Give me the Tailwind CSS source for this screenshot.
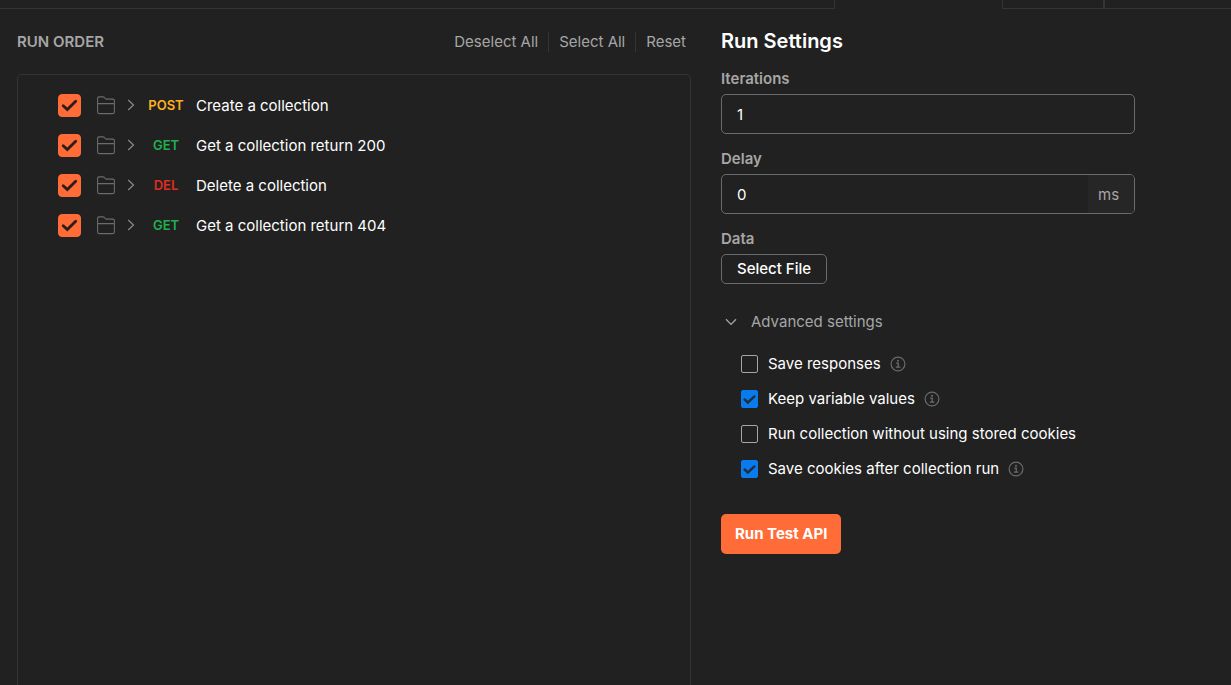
<!DOCTYPE html>
<html lang="en">
<head>
<meta charset="utf-8">
<meta name="viewport" content="width=device-width, initial-scale=1">
<title>Collection Runner</title>
<script src="https://cdn.jsdelivr.net/npm/@tailwindcss/browser@4"></script>
</head>
<body class="flex min-h-screen flex-col bg-[#212121] font-['Inter',sans-serif] text-[15px] leading-5 text-white">
<svg class="hidden" aria-hidden="true">
  <symbol id="check" viewBox="0 0 23 23"><path d="M5.2 11.7l4.1 3.9 8.4-8.3" fill="none" stroke="currentColor" stroke-width="2.8" stroke-linecap="round"/></symbol>
  <symbol id="check-small" viewBox="0 0 17 18"><path d="M3.6 9.5l3.3 3 6.5-6.1" fill="none" stroke="currentColor" stroke-width="2.4" stroke-linecap="round"/></symbol>
  <symbol id="folder" viewBox="0 0 18 19"><path d="M.6 8V2.4Q.6.9 2.1.9h4.1q.8 0 1.2.6l.9 1.2q.3.4 1 .4h6.6q1.5 0 1.5 1.5v11.5q0 1.5-1.5 1.5H2.1q-1.5 0-1.5-1.5zM.6 7.6h16.8" fill="none" stroke="currentColor" stroke-width="1.1"/></symbol>
  <symbol id="chevron-right" viewBox="0 0 8 12"><path d="M1.2 1l5.3 5-5.3 5" fill="none" stroke="currentColor" stroke-width="1.2"/></symbol>
  <symbol id="info" viewBox="0 0 16 16"><circle cx="8" cy="8" r="6.9" fill="none" stroke="currentColor" stroke-width="1.2"/><path d="M6.2 7.1h2v4M5.8 11.2h4.6" fill="none" stroke="currentColor" stroke-width="1.3"/><circle cx="8" cy="4.7" r="1" fill="currentColor"/></symbol>
</svg>

<div class="flex h-[9px] shrink-0">
  <div class="min-w-0 flex-1 border-r border-b border-[#343434]"></div>
  <div class="w-[167px]"></div>
  <div class="w-[101px] border-b border-l border-[#343434]"></div>
  <div class="w-32 border-b border-l-2 border-[#343434]"></div>
</div>

<main class="flex flex-1">
  <section class="flex min-w-0 flex-1 flex-col pl-[17px]">
    <header class="flex h-[65px] items-center justify-between pr-[5px] text-[#a6a6a6]">
      <h1 class="font-semibold">RUN ORDER</h1>
      <div class="flex items-center">
        <button type="button" class="pr-2.5">Deselect All</button>
        <button type="button" class="border-l border-[#343434] px-2.5">Select All</button>
        <button type="button" class="border-l border-[#343434] pl-2.5">Reset</button>
      </div>
    </header>
    <ul class="flex-1 rounded-t-[5px] border border-b-0 border-[#343434] pt-2.5 pl-10">
      <li class="flex h-10 items-center">
        <span class="grid size-[23px]">
          <input id="r1" type="checkbox" checked class="col-start-1 row-start-1 size-[23px] appearance-none rounded-[4px] border border-[#a6a6a6] checked:border-[#ff6c37] checked:bg-[#ff6c37]">
          <svg class="pointer-events-none col-start-1 row-start-1 size-[23px] text-[#2b1d17]"><use href="#check"/></svg>
        </span>
        <svg class="ml-4 h-[19px] w-[18px] text-[#6b6b6b]"><use href="#folder"/></svg>
        <svg class="ml-3 h-3 w-2 text-[#8a8a8a]"><use href="#chevron-right"/></svg>
        <span class="ml-[11px] w-10 text-center text-[13px] leading-5 font-semibold text-[#ffb020]">POST</span>
        <label for="r1" class="ml-2.5 pt-0.5">Create a collection</label>
      </li>
      <li class="flex h-10 items-center">
        <span class="grid size-[23px]">
          <input id="r2" type="checkbox" checked class="col-start-1 row-start-1 size-[23px] appearance-none rounded-[4px] border border-[#a6a6a6] checked:border-[#ff6c37] checked:bg-[#ff6c37]">
          <svg class="pointer-events-none col-start-1 row-start-1 size-[23px] text-[#2b1d17]"><use href="#check"/></svg>
        </span>
        <svg class="ml-4 h-[19px] w-[18px] text-[#6b6b6b]"><use href="#folder"/></svg>
        <svg class="ml-3 h-3 w-2 text-[#8a8a8a]"><use href="#chevron-right"/></svg>
        <span class="ml-[11px] w-10 text-center text-[13px] leading-5 font-semibold text-[#20b04f]">GET</span>
        <label for="r2" class="ml-2.5 pt-0.5">Get a collection return 200</label>
      </li>
      <li class="flex h-10 items-center">
        <span class="grid size-[23px]">
          <input id="r3" type="checkbox" checked class="col-start-1 row-start-1 size-[23px] appearance-none rounded-[4px] border border-[#a6a6a6] checked:border-[#ff6c37] checked:bg-[#ff6c37]">
          <svg class="pointer-events-none col-start-1 row-start-1 size-[23px] text-[#2b1d17]"><use href="#check"/></svg>
        </span>
        <svg class="ml-4 h-[19px] w-[18px] text-[#6b6b6b]"><use href="#folder"/></svg>
        <svg class="ml-3 h-3 w-2 text-[#8a8a8a]"><use href="#chevron-right"/></svg>
        <span class="ml-[11px] w-10 text-center text-[13px] leading-5 font-semibold text-[#e02b20]">DEL</span>
        <label for="r3" class="ml-2.5 pt-0.5">Delete a collection</label>
      </li>
      <li class="flex h-10 items-center">
        <span class="grid size-[23px]">
          <input id="r4" type="checkbox" checked class="col-start-1 row-start-1 size-[23px] appearance-none rounded-[4px] border border-[#a6a6a6] checked:border-[#ff6c37] checked:bg-[#ff6c37]">
          <svg class="pointer-events-none col-start-1 row-start-1 size-[23px] text-[#2b1d17]"><use href="#check"/></svg>
        </span>
        <svg class="ml-4 h-[19px] w-[18px] text-[#6b6b6b]"><use href="#folder"/></svg>
        <svg class="ml-3 h-3 w-2 text-[#8a8a8a]"><use href="#chevron-right"/></svg>
        <span class="ml-[11px] w-10 text-center text-[13px] leading-5 font-semibold text-[#20b04f]">GET</span>
        <label for="r4" class="ml-2.5 pt-0.5">Get a collection return 404</label>
      </li>
    </ul>
  </section>

  <form class="flex w-[540px] flex-col items-start pt-[18px] pr-24 pl-[30px]">
    <h2 class="text-xl leading-7 font-semibold">Run Settings</h2>

    <label for="iterations" class="mt-3.5 mb-[5px] font-semibold text-[#a6a6a6]">Iterations</label>
    <input id="iterations" type="text" value="1" class="h-10 w-full rounded-[5px] border border-[#6b6b6b] bg-transparent px-[15px]">

    <label for="delay" class="mt-[15px] mb-[5px] font-semibold text-[#a6a6a6]">Delay</label>
    <div class="flex h-10 w-full overflow-hidden rounded-[5px] border border-[#6b6b6b]">
      <input id="delay" type="text" value="0" class="min-w-0 flex-1 bg-transparent px-[15px] pt-0.5">
      <span class="flex w-[46px] items-center bg-[#262626] pt-0.5 pl-2.5 text-[#a6a6a6]">ms</span>
    </div>

    <label for="data" class="mt-[15px] mb-[5px] font-semibold text-[#a6a6a6]">Data</label>
    <button id="data" type="button" class="h-[30px] rounded-[5px] border border-[#6b6b6b] px-[15px] font-medium">Select File</button>

    <button type="button" class="mt-7 flex items-center gap-3.5 pl-1 text-[#a6a6a6]">
      <svg class="h-2 w-3" viewBox="0 0 12 8"><path d="M1 1.2l5 5.2 5-5.2" fill="none" stroke="currentColor" stroke-width="1.3"/></svg>
      Advanced settings
    </button>

    <ul class="mt-3.5 pl-5">
      <li class="flex h-[35px] items-center">
        <input id="s1" type="checkbox" class="h-[18px] w-[17px] appearance-none rounded-[2px] border border-[#a6a6a6]">
        <label for="s1" class="ml-2.5">Save responses</label>
        <svg class="ml-[9px] size-4 text-[#6b6b6b]"><use href="#info"/></svg>
      </li>
      <li class="flex h-[35px] items-center">
        <span class="grid">
          <input id="s2" type="checkbox" checked class="col-start-1 row-start-1 h-[18px] w-[17px] appearance-none rounded-[2px] border border-[#a6a6a6] checked:border-[#097bed] checked:bg-[#097bed]">
          <svg class="pointer-events-none col-start-1 row-start-1 h-[18px] w-[17px] text-[#212f40]"><use href="#check-small"/></svg>
        </span>
        <label for="s2" class="ml-2.5">Keep variable values</label>
        <svg class="ml-[9px] size-4 text-[#6b6b6b]"><use href="#info"/></svg>
      </li>
      <li class="flex h-[35px] items-center">
        <input id="s3" type="checkbox" class="h-[18px] w-[17px] appearance-none rounded-[2px] border border-[#a6a6a6]">
        <label for="s3" class="ml-2.5">Run collection without using stored cookies</label>
      </li>
      <li class="flex h-[35px] items-center">
        <span class="grid">
          <input id="s4" type="checkbox" checked class="col-start-1 row-start-1 h-[18px] w-[17px] appearance-none rounded-[2px] border border-[#a6a6a6] checked:border-[#097bed] checked:bg-[#097bed]">
          <svg class="pointer-events-none col-start-1 row-start-1 h-[18px] w-[17px] text-[#212f40]"><use href="#check-small"/></svg>
        </span>
        <label for="s4" class="ml-2.5">Save cookies after collection run</label>
        <svg class="ml-[9px] size-4 text-[#6b6b6b]"><use href="#info"/></svg>
      </li>
    </ul>

    <button type="button" class="mt-7 h-10 rounded-[5px] bg-[#ff6c37] px-3.5 font-bold">Run Test API</button>
  </form>
</main>
</body>
</html>
